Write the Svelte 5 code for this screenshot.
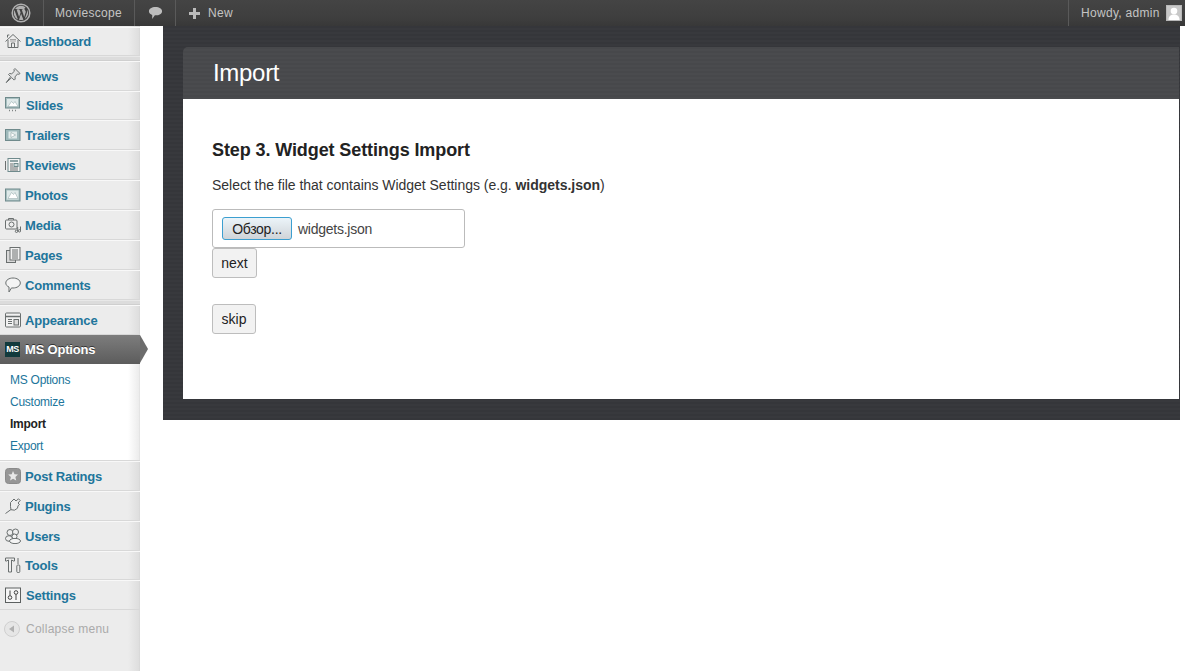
<script>
  const groupA = [
    { n: 'News', h: 30, x: 25, i: 'pin' },
    { n: 'Slides', h: 29, x: 26, i: 'slides' },
    { n: 'Trailers', h: 30, x: 25, i: 'trailers' },
    { n: 'Reviews', h: 30, x: 25, i: 'reviews' },
    { n: 'Photos', h: 30, x: 25, i: 'photos' },
    { n: 'Media', h: 30, x: 25, i: 'media' },
    { n: 'Pages', h: 30, x: 25, i: 'pages' },
    { n: 'Comments', h: 30, x: 25, i: 'comments' }
  ];
  const groupB = [
    { n: 'Post Ratings', h: 30, x: 25, i: 'star' },
    { n: 'Plugins', h: 30, x: 25, i: 'plugins' },
    { n: 'Users', h: 30, x: 25, i: 'users' },
    { n: 'Tools', h: 29, x: 25, i: 'tools' },
    { n: 'Settings', h: 30, x: 26, i: 'settings' }
  ];
  const sub = ['MS Options', 'Customize', 'Import', 'Export'];
</script>

{#snippet icon(k)}
  <svg class="ic" viewBox="0 0 16 16" width="16" height="16" fill="none" stroke="#6a6f6f" stroke-width="1">
    {#if k === 'home'}
      <path d="M.5 8.500 8 1.500l7.500 7M3 7v7.500h10V7M6.500 14.500v-4.500h3v4.500M2.500 4.500V2h1.800" /><path d="M5 8h6M5 6.500h6" stroke="#a5a5a5" />
    {:else if k === 'pin'}
      <path d="M10 .500 15 5.500l-1.200.8-1.300-.4-2.500 3 .2 2.200-1 1-2.500-2.500-5.500 5 4.500-6L3.500 6.500l1-1 2.200.3L9.300 3.300 9 1.500z" fill="#e4e4e4" />
    {:else if k === 'slides'}
      <rect x=".5" y=".5" width="14" height="10.500" fill="#a9c0c1" stroke="#6f8a8c" /><rect x="2" y="2" width="11" height="7.500" fill="#dfe9e9" stroke="none" /><path d="M3 9.500 6.500 4.500l2 2 1.500-2 3 5z" fill="#fff" stroke="#8aa3a4" stroke-width=".5" /><path d="M4 13.500h1M7 13.500h1M10 13.500h1" stroke="#7f8484" stroke-width="1.500" />
    {:else if k === 'trailers'}
      <rect x=".5" y="2.500" width="14.500" height="11" fill="#9db8ba" stroke="#6f8a8c" /><rect x="3.500" y="4.500" width="8.500" height="7" fill="#dfe9e9" stroke="none" /><path d="M6 5.500v5l4.500-2.500z" fill="#fff" stroke="#7c9697" stroke-width=".5" />
    {:else if k === 'reviews'}
      <rect x="3" y="1.500" width="12" height="13" fill="#f4f4f4" stroke="#6f8a8c" /><path d="M5 4h8" stroke="#6f8a8c" stroke-width="1.500" /><path d="M5 7h3M5 9h3M5 11h8M5 13h8M.5 4v9" /><rect x="9" y="6.500" width="4" height="3" fill="#cfdcdc" stroke="#6f8a8c" />
    {:else if k === 'photos'}
      <rect x=".5" y="2" width="14.500" height="12" fill="#a9c0c1" stroke="#6f8a8c" /><rect x="2" y="3.500" width="11.500" height="9" fill="#dfe9e9" stroke="none" /><path d="M3 11.500 6.500 5.500l2 2 1.500-2 3 6z" fill="#fff" stroke="#8aa3a4" stroke-width=".5" />
    {:else if k === 'media'}
      <rect x=".5" y="3" width="11.500" height="9" rx="1" fill="#eee" /><path d="M3.500 3V1.500h5V3" /><circle cx="6.500" cy="7.500" r="2.500" /><circle cx="11.500" cy="14.300" r="1.200" /><circle cx="14.500" cy="13.800" r="1.200" /><path d="M12.700 14.300V10M15.500 13.800V9.500" />
    {:else if k === 'pages'}
      <rect x="1.500" y="3.500" width="9" height="12" fill="#d8d8d8" /><rect x="5" y=".5" width="10" height="12.500" fill="#f2f2f2" /><path d="M7 3h6M7 5h6M7 7h6M7 9h6M7 11h6" />
    {:else if k === 'comments'}
      <path d="M8 1c4 0 7.300 2.100 7.300 5S12 11 8 11c-.6 0-1 0-1.500-.1L4 15v-5C2 9.200.8 7.800.8 6 .8 3.100 4 1 8 1z" fill="#f4f4f4" />
    {:else if k === 'appearance'}
      <rect x=".5" y="1" width="15" height="14" rx="1" fill="#f2f2f2" /><path d="M1 4.500h14" stroke-width="1.500" /><path d="M3 7.500h4M3 9.500h4M3 11.500h4" /><rect x="9" y="7.500" width="4.500" height="5.500" fill="#dcdcdc" />
    {:else if k === 'star'}
      <rect x=".5" y=".5" width="15" height="15" rx="3" fill="#969696" stroke="#8a8a8a" /><path d="m8 3 1.500 3.200 3.500.4-2.600 2.300.8 3.600L8 10.700l-2.900 1.800.8-3.600L3.200 6.600l3.500-.4z" fill="#e9e9e9" stroke="none" />
    {:else if k === 'plugins'}
      <path d="M5.500 4.500 9 1l2 2L13.500.8l1.700 1.700L13 5l1.500 1.500-1.500 1.200-.5 2.500-3 2-3.500-.5-.5-3z" fill="#eee" /><path d="M6 11.500 .5 15.500" />
    {:else if k === 'users'}
      <circle cx="5" cy="4.500" r="3" fill="#eee" /><circle cx="10.500" cy="4" r="3" fill="#eee" /><ellipse cx="4" cy="10.500" rx="3.500" ry="2.800" fill="#eee" /><circle cx="9.500" cy="8.500" r="2.500" fill="#f4f4f4" /><ellipse cx="10" cy="13" rx="5.500" ry="2.600" fill="#f4f4f4" />
    {:else if k === 'tools'}
      <path d="M.5 1h9v3H8L7 3H6.500v12H3.500V3H3L2 4H.5z" fill="#eee" /><path d="M13 1v6" /><rect x="11.800" y="8" width="3" height="7.500" rx="1" fill="#eee" />
    {:else if k === 'settings'}
      <rect x=".5" y="1" width="15" height="14.500" fill="#f6f6f6" stroke="#5c6060" /><circle cx="5" cy="10.500" r="1.800" stroke="#444" /><circle cx="11" cy="5.500" r="1.800" stroke="#444" /><path d="M5 3.500v5M11 7.300V13" stroke="#444" />
    {/if}
  </svg>
{/snippet}

{#snippet row(m)}
  <div class="item" style="height:{m.h}px">
    <span class="icbox">{@render icon(m.i)}</span>
    <span class="lbl" style="left:{m.x}px">{m.n}</span>
  </div>
{/snippet}

<div class="page">
  <header class="bar">
    <div class="seg wp">
      <svg viewBox="0 0 20 20" width="20" height="20">
        <circle cx="10" cy="10" r="8.800" fill="none" stroke="#b0b0b0" stroke-width="1.500" />
        <path fill="#b0b0b0" d="M2.800 10c0 2.900 1.700 5.400 4.100 6.500L3.400 7.100A7.200 7.200 0 0 0 2.800 10zm12-.4c0-.9-.3-1.500-.6-2-.4-.6-.7-1.100-.7-1.700 0-.7.5-1.300 1.200-1.300h.1A7.200 7.200 0 0 0 4 6l.5.000c.7 0 1.900-.1 1.900-.1.400 0 .4.500 0 .6 0 0-.4 0-.8.100l2.500 7.500 1.500-4.500-1.100-3c-.4 0-.7-.1-.7-.1-.4 0-.3-.6 0-.6 0 0 1.100.1 1.800.1s1.900-.1 1.900-.1c.4 0 .4.500 0 .6 0 0-.4 0-.8.100l2.500 7.400.7-2.300c.3-1 .6-1.700.6-2.300zM10.100 10.700 8 16.800a7.200 7.200 0 0 0 4.400-.1l-.1-.1zm6.200-4.100.1.700c0 .7-.1 1.500-.5 2.500l-2.200 6.200a7.200 7.200 0 0 0 2.600-9.400z" />
      </svg>
    </div>
    <div class="seg site">Moviescope</div>
    <div class="seg cmt">
      <svg viewBox="0 0 16 14" width="15" height="14"><path fill="#bdbdbd" d="M8 .500c4 0 7 1.900 7 4.500 0 2.600-3 4.500-7 4.500h-.7L4.500 13.500V9C2.300 8.300 1 6.800 1 5 1 2.400 4 .500 8 .500z" /></svg>
    </div>
    <div class="seg new">
      <svg viewBox="0 0 11 11" width="11" height="11"><path fill="#bbb" d="M4 0h3v4h4v3H7v4H4V7H0V4h4z" /></svg>
      <span>New</span>
    </div>
    <div class="seg howdy">
      <span>Howdy, admin</span>
      <svg viewBox="0 0 16 16" width="16" height="16"><rect width="16" height="16" fill="#b8b8b8" /><rect x="1" y="1" width="14" height="14" fill="#c8c8c8" /><circle cx="8" cy="6" r="3.300" fill="#fff" /><path fill="#fff" d="M2.500 15c0-4 2.500-5.500 5.500-5.500s5.500 1.500 5.500 5.500z" /></svg>
    </div>
  </header>

  <div class="layout">
    <nav class="side">
      {@render row({ n: 'Dashboard', h: 29, x: 25, i: 'home' })}
      <div class="sep"></div>
      {#each groupA as m}{@render row(m)}{/each}
      <div class="sep"></div>
      {@render row({ n: 'Appearance', h: 30, x: 25, i: 'appearance' })}
      <div class="cur">
        <span class="ms">MS</span>
        <span class="curlbl">MS Options</span>
        <span class="arrow"></span>
      </div>
      <ul class="sub">
        {#each sub as s}
          <li class:on={s === 'Import'}>{s}</li>
        {/each}
      </ul>
      {#each groupB as m}{@render row(m)}{/each}
      <div class="collapse">
        <svg viewBox="0 0 16 16" width="16" height="16"><circle cx="8" cy="8" r="7.500" fill="#e6e6e6" stroke="#cfcfcf" /><path d="M10 4.500v7L5 8z" fill="#b0b0b0" /></svg>
        <span>Collapse menu</span>
      </div>
    </nav>

    <main class="main">
      <section class="panel">
        <div class="inner">
          <h1 class="title">Import</h1>
          <div class="body">
            <h2>Step 3. Widget Settings Import</h2>
            <p>Select the file that contains Widget Settings (e.g. <b>widgets.json</b>)</p>
            <div class="file">
              <button class="browse" type="button">Обзор...</button>
              <span class="fname">widgets.json</span>
            </div>
            <button class="btn next" type="button">next</button>
            <button class="btn skip" type="button">skip</button>
          </div>
        </div>
      </section>
    </main>
  </div>
</div>

<style>
  :global(body) { margin: 0; background: #fff; }
  .page { font-family: "Liberation Sans", Arial, sans-serif; min-height: 671px; width: 1185px; overflow: hidden; }
  .bar {
    height: 26px; display: flex; align-items: stretch; color: #c4c4c4; font-size: 12px; letter-spacing: .3px;
    background: linear-gradient(#444, #3e3e3e 70%, #383838);
  }
  .seg { display: flex; align-items: center; box-sizing: border-box; border-right: 1px solid #5a5a5a; }
  .wp { width: 44px; padding-left: 11px; }
  .site { width: 91px; padding-left: 11px; }
  .cmt { width: 41px; padding-left: 13px; }
  .new { gap: 8px; padding-left: 13px; border-right: 0; }
  .howdy {
    margin-left: auto; width: 117px; padding-left: 12px; gap: 6px; border-right: 0; border-left: 1px solid #5a5a5a;
  }
  .layout { display: flex; align-items: stretch; height: 645px; }
  .side {
    width: 140px; flex: none; display: flex; flex-direction: column; box-sizing: border-box; padding-top: 1px;
    background: linear-gradient(90deg, #ececec 0, #ececec 128px, #dedede 139px, #d4d4d4 140px);
  }
  .item {
    position: relative; flex: none; box-sizing: border-box; border-bottom: 1px solid #d8d8d8;
    box-shadow: inset 0 1px 0 #f8f8f8;
  }
  .icbox { position: absolute; left: 5px; top: 50%; margin-top: -8px; width: 16px; height: 16px; }
  .ic { display: block; }
  .lbl {
    position: absolute; top: 50%; transform: translateY(-50%); font-size: 13px; font-weight: 700; color: #21759b; white-space: nowrap; letter-spacing: -.2px;
  }
  .sep { height: 5px; flex: none; background: #dcdcdc; border-bottom: 1px solid #cfcfcf; box-sizing: border-box; box-shadow: inset 0 1px 0 #e8e8e8; }
  .cur {
    position: relative; height: 29px; flex: none; display: flex; align-items: center; padding-left: 5px; gap: 5px;
    background: linear-gradient(#7d7d7d, #5c5c5c); color: #fff; font-size: 13px; font-weight: 700; letter-spacing: -.2px;
  }
  .ms {
    width: 15px; height: 15px; background: #123a3c; color: #fff; font-size: 9px; font-weight: 700; line-height: 15px; text-align: center;
    letter-spacing: -0.5px; display: block;
  }
  .curlbl { text-shadow: 0 -1px 0 #333; }
  .arrow {
    position: absolute; left: 140px; top: 0; width: 0; height: 0;
    border-left: 8px solid #6c6c6c; border-top: 14.500px solid transparent; border-bottom: 14.500px solid transparent;
  }
  .sub {
    list-style: none; margin: 0; padding: 5px 0 4px 10px; height: 97px; box-sizing: border-box; flex: none;
    background: linear-gradient(90deg, #fff 0, #fff 128px, #ececec 139px, #dcdcdc 140px);
    border-bottom: 1px solid #d8d8d8; font-size: 12px; color: #21759b; letter-spacing: -.25px;
  }
  .sub li { height: 22px; line-height: 22px; }
  .sub .on { color: #222; font-weight: 700; }
  .collapse { display: flex; align-items: center; gap: 6px; padding: 11px 0 0 4px; color: #aaa; font-size: 12px; letter-spacing: .25px; }
  .main { flex: 1; padding-left: 23px; padding-right: 5px; background: #fff; }
  .panel {
    box-sizing: border-box; height: 394px; padding: 21px 1px 21px 20px;
    background: repeating-linear-gradient(#35363a 0, #35363a 2px, #38393d 2px, #38393d 4px);
  }
  .inner { height: 352px; display: flex; flex-direction: column; }
  .title {
    margin: 0; height: 52px; line-height: 52px; padding-left: 30px; box-sizing: border-box; color: #fff; font-size: 24px; font-weight: 400; letter-spacing: -.3px;
    border-radius: 5px 0 0 0;
    background: repeating-linear-gradient(#47484b 0, #47484b 2px, #4a4b4e 2px, #4a4b4e 4px);
  }
  .body { flex: 1; background: #fff; padding: 40px 29px 0; color: #333; position: relative; }
  h2 { margin: 0; font-size: 18px; line-height: 22px; font-weight: 700; color: #222; letter-spacing: -.1px; }
  p { margin: 14px 0 0; font-size: 14px; line-height: 20px; color: #333; letter-spacing: -.03px; }
  p b { color: #333; }
  .file {
    margin-top: 14px; box-sizing: border-box; width: 253px; height: 39px; border: 1px solid #bbb; border-radius: 3px;
    display: flex; align-items: center; padding-left: 9px; gap: 6px; font-size: 14px; color: #444; letter-spacing: -.25px;
  }
  .browse {
    width: 70px; height: 23px; padding: 0; font: 14px "Liberation Sans", Arial, sans-serif; letter-spacing: -.3px; color: #222; border-radius: 3px;
    border: 1px solid #3c9fd0; background: linear-gradient(#ecf4f9, #cfd4d8);
  }
  .btn {
    display: block; box-sizing: border-box; height: 30px; padding: 0; font: 14px "Liberation Sans", Arial, sans-serif; color: #222;
    background: #f2f2f2; border: 1px solid #bdbdbd; border-radius: 3px;
  }
  .next { width: 45px; }
  .skip { width: 44px; margin-top: 26px; }
</style>
